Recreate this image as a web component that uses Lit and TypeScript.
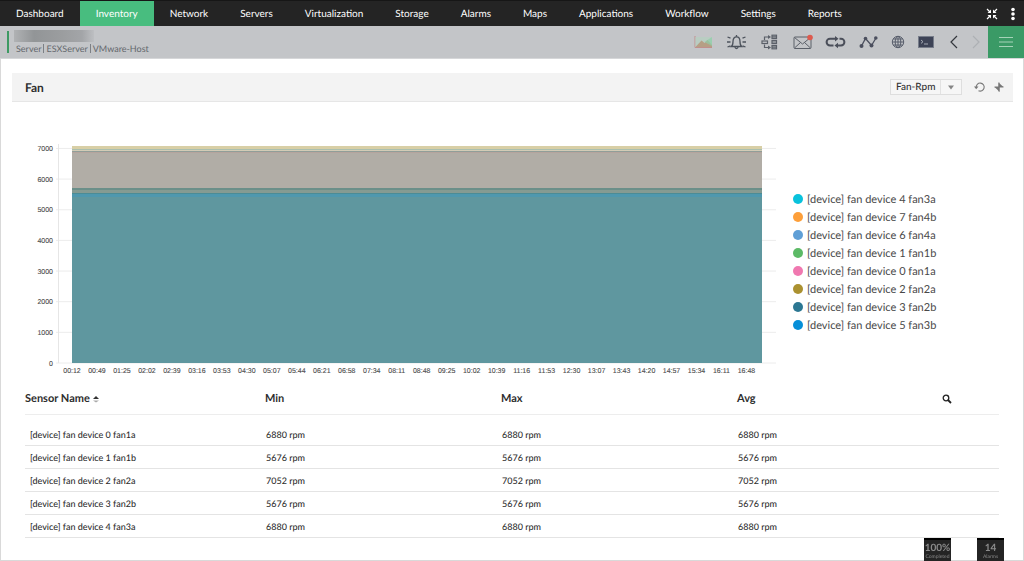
import { LitElement, html, svg, css } from "lit";
import { customElement, property, state } from "lit/decorators.js";
import { classMap } from "lit/directives/class-map.js";

const NAV = ["Dashboard", "Inventory", "Network", "Servers", "Virtualization", "Storage", "Alarms", "Maps", "Applications", "Workflow", "Settings", "Reports"];

const TIMES = ["00:12", "00:49", "01:25", "02:02", "02:39", "03:16", "03:53", "04:30", "05:07", "05:44", "06:21", "06:58", "07:34", "08:11", "08:48", "09:25", "10:02", "10:39", "11:16", "11:53", "12:30", "13:07", "13:43", "14:20", "14:57", "15:34", "16:11", "16:48"];

const LEGEND = [
  { name: "[device] fan device 4 fan3a", color: "#09c2dc" },
  { name: "[device] fan device 7 fan4b", color: "#fd9f3a" },
  { name: "[device] fan device 6 fan4a", color: "#5f9fd6" },
  { name: "[device] fan device 1 fan1b", color: "#5cba66" },
  { name: "[device] fan device 0 fan1a", color: "#f078b0" },
  { name: "[device] fan device 2 fan2a", color: "#ab9130" },
  { name: "[device] fan device 3 fan2b", color: "#2c7792" },
  { name: "[device] fan device 5 fan3b", color: "#068fd8" },
];

const ROWS = [
  { name: "[device] fan device 0 fan1a", rpm: 6880 },
  { name: "[device] fan device 1 fan1b", rpm: 5676 },
  { name: "[device] fan device 2 fan2a", rpm: 7052 },
  { name: "[device] fan device 3 fan2b", rpm: 5676 },
  { name: "[device] fan device 4 fan3a", rpm: 6880 },
];

// Overlapping translucent series flatten into these bands: top edge and colour.
const BANDS = [
  { y: 6, color: "#d8cfa6" },
  { y: 9, color: "#abbfae" },
  { y: 10, color: "#d3ccb6" },
  { y: 11, color: "#919e99" },
  { y: 12, color: "#b5a49d" },
  { y: 13, color: "#b1ada6" },
  { y: 48, color: "#6b8f89" },
  { y: 50, color: "#859b92" },
  { y: 53, color: "#4b8c96" },
  { y: 54, color: "#4f98ae" },
  { y: 57, color: "#5f979f" },
];

const TOOLS = [
  {
    label: "Performance graph",
    art: svg`<path d="M1.500 2v11.500h17" fill="none" stroke="#c08f8c"/><path d="M2 13V3h16.500v10z" fill="#b9cdc2"/><path d="M2 13l6-6.500 3 2.500 3-3 4.500 5v2z" fill="#b5977a" opacity=".85"/><path d="M11 8l7.500-5v9z" fill="#8fcfa8" opacity=".7"/>`,
  },
  {
    label: "Alarms",
    art: svg`<g fill="none" stroke="#4d535c" stroke-width="1.300"><path d="M4.800 12.500c1.200-.8 1.700-2 1.700-5C6.500 4.500 8 2.800 10 2.800s3.500 1.700 3.500 4.700c0 3 .5 4.200 1.700 5z"/><path d="M8.500 13c.2 2 2.800 2 3 0M10 2.800V1"/><path d="M1 3l3 1.200M.5 8h3.500M1 13l3-1.200M19 3l-3 1.200M19.500 8H16M19 13l-3-1.200"/></g>`,
  },
  {
    label: "Dependencies",
    art: svg`<g fill="none" stroke="#5b6069" stroke-width="1.200"><rect x="2.500" y="7" width="5.500" height="2.500"/><path d="M5 6V3h4M5 10.500V13.500h4"/><rect x="12.500" y="1.200" width="4.500" height="3.200"/><rect x="12.500" y="6.400" width="4.500" height="3.200"/><rect x="12.500" y="11.600" width="4.500" height="3.200"/><path d="M12.500 2.800h4.500M12.500 8h4.500M12.500 13.200h4.500"/></g><path d="M8.500 1L11.500 3l-3 2zM8.500 11.500l3 2-3 2z" fill="#5b6069"/>`,
  },
  {
    label: "Mail notifications",
    art: svg`<g fill="none" stroke="#5b6069" stroke-width="1"><rect x="1.500" y="3" width="17" height="11.500" rx="1"/><path d="M2 3.500l8 6.500 8-6.500M2 14l6-5.500M18 14l-6-5.500"/></g><circle cx="17.500" cy="3.500" r="2.800" fill="#dd5a4e"/>`,
  },
  {
    label: "Link",
    art: svg`<g fill="none" stroke="#4b4f5a" stroke-width="2"><path d="M8 11.500H4.500a3.400 3.400 0 0 1 0-6.800H11M14 4.700h1.500a3.400 3.400 0 0 1 0 6.800H12"/></g><path d="M9.500 2l3.500 2.700-3.500 2.700zM12.500 8.800L9 11.500l3.500 2.700z" fill="#4b4f5a"/>`,
  },
  {
    label: "Trend",
    art: svg`<path d="M3 12l4-7.500 6 7L17.500 4" fill="none" stroke="#4b4f5e" stroke-width="1.300"/><g fill="#4b4f5e"><circle cx="3" cy="12" r="2"/><circle cx="7" cy="4.500" r="1.800"/><circle cx="13" cy="11.500" r="2"/><circle cx="17.300" cy="4" r="1.800"/></g>`,
  },
  {
    label: "Web",
    width: 14,
    box: "3 0 14 16",
    art: svg`<g fill="none" stroke="#575d6b" stroke-width="1"><circle cx="10" cy="8" r="5.700"/><ellipse cx="10" cy="8" rx="2.800" ry="5.700"/><path d="M10 2.300v11.400M4.300 8h11.400M5.200 5h9.600M5.200 11h9.600"/></g>`,
  },
  {
    label: "Terminal",
    width: 18,
    box: "1 0 18 16",
    art: svg`<rect x="2.500" y="2.500" width="15" height="11" fill="#3d4356" stroke="#777d8a"/><path d="M5 6l2 1.700L5 9.400M8 10h4" fill="none" stroke="#a5aab4"/>`,
  },
];

@customElement("top-nav")
class TopNav extends LitElement {
  @state() private active = "Inventory";

  static styles = css`
    :host { display: block; background: #242424; border-top: 1px solid #161616; }
    .bar { display: flex; align-items: stretch; height: 25px; }
    .links { display: flex; flex: 1; }
    .link { display: flex; align-items: center; padding: 0 16px; color: #fff; font-size: 10px; font-weight: 400; text-decoration: none; white-space: nowrap; }
    .active { background: #48bd7f; }
    .tools { display: flex; align-items: center; gap: 8px; padding-right: 5px; }
    .tool { display: flex; padding: 0; border: 0; background: none; }
  `;

  render() {
    return html`<nav class="bar" aria-label="Main">
      <div class="links">
        ${NAV.map(
          (n) => html`<a class=${classMap({ link: true, active: n === this.active })} href="#" @click=${(e: Event) => { e.preventDefault(); this.active = n; }}>${n}</a>`
        )}
      </div>
      <div class="tools">
        <button class="tool" aria-label="Exit full screen">
          <svg width="14" height="14" viewBox="0 0 14 14"><path d="M2 2l3 3M12 2L9 5M2 12l3-3M12 12L9 9" stroke="#fff" stroke-width="1.200"/><path d="M6 2.500V6H2.500zM8 2.500V6h3.500zM6 11.500V8H2.500zM8 11.500V8h3.500z" fill="#fff"/></svg>
        </button>
        <button class="tool" aria-label="More">
          <svg width="12" height="16" viewBox="0 0 12 16"><g fill="#fff"><circle cx="6" cy="3.500" r="1.800"/><circle cx="6" cy="8" r="1.800"/><circle cx="6" cy="12.500" r="1.800"/></g></svg>
        </button>
      </div>
    </nav>`;
  }
}

@customElement("device-header")
class DeviceHeader extends LitElement {
  static styles = css`
    :host { display: flex; height: 33px; background: #c3c5c8; border-bottom: 1px solid #d6d7d9; box-sizing: border-box; }
    .info { flex: 1; display: flex; align-items: center; gap: 5px; padding-left: 7px; }
    .mark { width: 2px; height: 22px; background: #3d9a63; }
    .name { width: 80px; height: 12px; background: linear-gradient(90deg, #b0b2b4, #929597 25%, #9b9d9f 60%, #a3a5a8 85%, #bdbfc2); }
    .path { display: flex; align-items: center; gap: 2px; padding: 1px 0 0 2px; font-size: 9px; line-height: 11px; color: #64686d; white-space: nowrap; }
    .part + .part { padding-left: 2px; border-left: 1px solid #7c8085; line-height: 9px; }
    .tools { display: flex; align-items: center; gap: 12px; padding-right: 5px; }
    .tool { display: flex; padding: 0; border: 0; background: none; }
    .arrows { display: flex; gap: 8px; }
    .menu { display: flex; align-items: center; justify-content: center; width: 36px; padding: 0; border: 0; background: #3a9a66; }
  `;

  render() {
    return html`
      <div class="info">
        <div class="mark"></div>
        <div>
          <div class="name"></div>
          <div class="path"><span class="part">Server</span><span class="part">ESXServer</span><span class="part">VMware-Host</span></div>
        </div>
      </div>
      <div class="tools">
        ${TOOLS.map((t) => html`<button class="tool" aria-label=${t.label}><svg width=${t.width ?? 21} height="16" viewBox=${t.box ?? "0 0 20 16"}>${t.art}</svg></button>`)}
        <div class="arrows">
          <button class="tool" aria-label="Previous"><svg width="14" height="16" viewBox="0 0 14 16"><path d="M10 2L4 8l6 6" fill="none" stroke="#33373d" stroke-width="1.200"/></svg></button>
          <button class="tool" aria-label="Next"><svg width="14" height="16" viewBox="0 0 14 16"><path d="M4 2l6 6-6 6" fill="none" stroke="#adb0b4" stroke-width="1.200"/></svg></button>
        </div>
      </div>
      <button class="menu" aria-label="Menu"><svg width="14" height="12" viewBox="0 0 14 12"><path d="M0 1.500h14M0 6h14M0 10.500h14" stroke="#a5d3b8"/></svg></button>
    `;
  }
}

@customElement("fan-chart")
class FanChart extends LitElement {
  static styles = css`
    :host { display: grid; grid-template-columns: minmax(0, 1fr) 206px; gap: 16px; }
    .plot { display: block; width: 100%; height: auto; }
    .tick { font-family: "Liberation Sans", Arial, sans-serif; font-size: 7px; fill: #4a4a4a; stroke: #4a4a4a; stroke-width: 0.1; }
    .end { text-anchor: end; }
    .mid { text-anchor: middle; }
    .legend { margin: 0; padding: 50px 0 0; list-style: none; }
    .item { display: flex; align-items: center; gap: 4px; height: 18px; font-size: 11px; line-height: 14px; color: #484848; white-space: nowrap; }
    .dot { width: 10px; height: 10px; border-radius: 50%; }
    .label { padding-top: 1px; }
  `;

  render() {
    const base = 223;
    const step = 30.65;
    return html`
      <svg class="plot" viewBox="0 0 752 238" role="img" aria-label="Fan speed in rpm">
        ${[0, 1, 2, 3, 4, 5, 6, 7].map(
          (k) => svg`<line x1="31" x2="751" y1=${base - k * step} y2=${base - k * step} stroke="#ececec"/>
            <text class="tick end" x="28" y=${base - k * step + 2.5}>${k * 1000}</text>`
        )}
        <line x1="33.5" x2="33.5" y1="4" y2="223" stroke="#e6e6e6"/>
        ${BANDS.map((b) => svg`<rect x="47" width="690" y=${b.y} height=${base - b.y} fill=${b.color} shape-rendering="crispEdges"/>`)}
        ${TIMES.map((t, i) => svg`<text class="tick mid" x=${47 + i * 24.98} y="233">${t}</text>`)}
      </svg>
      <ul class="legend">
        ${LEGEND.map((l) => html`<li class="item"><span class="dot" style="background:${l.color}"></span><span class="label">${l.name}</span></li>`)}
      </ul>
    `;
  }
}

@customElement("sensor-table")
class SensorTable extends LitElement {
  @property({ attribute: false }) rows = ROWS;

  static styles = css`
    :host { display: block; }
    .table { width: 100%; table-layout: fixed; border-collapse: separate; border-spacing: 0; }
    .c1 { width: 240px; }
    .c2 { width: 236px; }
    .c3 { width: 205px; }
    .c4 { width: 57px; }
    .head { height: 31px; padding: 1px 0 0; border-bottom: 1px solid #ededed; text-align: left; font-size: 11px; font-weight: 700; color: #2e2e2e; }
    .sort { display: inline-flex; align-items: center; gap: 3px; padding: 0; border: 0; background: none; font: inherit; color: inherit; text-rendering: inherit; }
    .find { display: flex; padding: 0; border: 0; background: none; }
    .gap { height: 8px; padding: 0; }
    .cell { height: 21px; padding: 1px 0 0 1px; border-bottom: 1px solid #e4e4e4; font-size: 9px; font-weight: 500; line-height: 14px; color: #2e2e2e; white-space: nowrap; }
    .first { padding-left: 5px; }
  `;

  render() {
    return html`<table class="table">
      <colgroup><col class="c1" /><col class="c2" /><col class="c2" /><col class="c3" /><col class="c4" /></colgroup>
      <thead>
        <tr>
          <th class="head" scope="col"><button class="sort">Sensor Name<svg width="6" height="8" viewBox="0 0 6 8"><path d="M0 4L3 1l3 3z" fill="#333"/><path d="M0 5.500l3 2 3-2z" fill="#aaa"/></svg></button></th>
          <th class="head" scope="col">Min</th>
          <th class="head" scope="col">Max</th>
          <th class="head" scope="col">Avg</th>
          <th class="head"><button class="find" aria-label="Search"><svg width="10" height="10" viewBox="0 0 10 10"><circle cx="4" cy="4" r="2.800" fill="none" stroke="#222" stroke-width="1.300"/><path d="M6 6l3 3" stroke="#222" stroke-width="1.800"/></svg></button></th>
        </tr>
      </thead>
      <tbody>
        <tr><td class="gap" colspan="5"></td></tr>
        ${this.rows.map(
          (r) => html`<tr>
            <td class="cell first">${r.name}</td>
            <td class="cell">${r.rpm} rpm</td>
            <td class="cell">${r.rpm} rpm</td>
            <td class="cell">${r.rpm} rpm</td>
            <td class="cell"></td>
          </tr>`
        )}
      </tbody>
    </table>`;
  }
}

@customElement("app-root")
class AppRoot extends LitElement {
  static styles = css`
    :host { display: flex; flex-direction: column; min-height: 100vh; font-family: Lato, sans-serif; color: #2e2e2e; background: #fff; text-rendering: geometricPrecision; }
    .main { flex: 1; padding: 14px 10px 0 11px; border: 1px solid #d9d9d9; border-top: 0; }
    .panel { display: flex; align-items: center; height: 29px; padding: 0 8px 0 13px; background: #f3f3f3; border-bottom: 1px solid #e6e6e6; box-sizing: border-box; }
    .title { flex: 1; margin: 0; font-size: 12px; font-weight: 700; }
    .picker { display: grid; align-items: center; margin-right: 12px; }
    .select { grid-area: 1 / 1; appearance: none; width: 72px; height: 16px; padding: 0 0 0 5px; border: 1px solid #dedede; border-radius: 0; background: #f6f6f6; font-family: inherit; font-size: 10px; font-weight: 500; line-height: 14px; color: #333; text-rendering: inherit; }
    .drop { grid-area: 1 / 1; justify-self: end; pointer-events: none; }
    .icon { display: flex; padding: 0; border: 0; background: none; }
    .icons { display: flex; gap: 7px; }
    .body { padding: 38px 14px 0 13px; }
    .table { margin-top: 4px; }
    .status { position: fixed; right: 20px; bottom: 0; display: flex; gap: 26px; }
    .badge { width: 27px; height: 23px; box-sizing: border-box; padding: 2px 0 0; border: 0; border-top: 2px solid #000; background: #242424; color: #8b8b8b; font-family: inherit; text-align: center; text-rendering: inherit; }
    .value { display: block; font-size: 10px; line-height: 11px; font-weight: 700; }
    .note { display: block; font-size: 5px; line-height: 6px; color: #8b8b8b; }
  `;

  render() {
    return html`
      <top-nav></top-nav>
      <device-header></device-header>
      <main class="main">
        <div class="panel">
          <h2 class="title">Fan</h2>
          <div class="picker">
            <select class="select" aria-label="Metric"><option>Fan-Rpm</option></select>
            <svg class="drop" width="22" height="16" viewBox="0 0 22 16"><path d="M.5 1v14" stroke="#e2e2e2"/><path d="M8 6.500h6L11 10.500z" fill="#858585"/></svg>
          </div>
          <div class="icons">
            <button class="icon" aria-label="Refresh"><svg width="12" height="12" viewBox="0 0 12 12"><path d="M2.200 6.500A4 4 0 1 1 4.500 9.700" fill="none" stroke="#777" stroke-width="1.100"/><path d="M0 5.500h4.500L2.200 8.300z" fill="#777"/></svg></button>
            <button class="icon" aria-label="Collapse"><svg width="12" height="12" viewBox="0 0 12 12"><path d="M5.500 1.500V6H10.500L8.800 4.400zM1.500 6H6.500V11L4.200 8.500z" fill="#777"/><path d="M6 1.500V6h4.500M1.500 6H6v4.500" stroke="#777" fill="none"/></svg></button>
          </div>
        </div>
        <div class="body">
          <fan-chart></fan-chart>
          <sensor-table class="table"></sensor-table>
        </div>
      </main>
      <div class="status">
        <button class="badge"><span class="value">100%</span><span class="note">Completed</span></button>
        <button class="badge"><span class="value">14</span><span class="note">Alarms</span></button>
      </div>
    `;
  }
}
